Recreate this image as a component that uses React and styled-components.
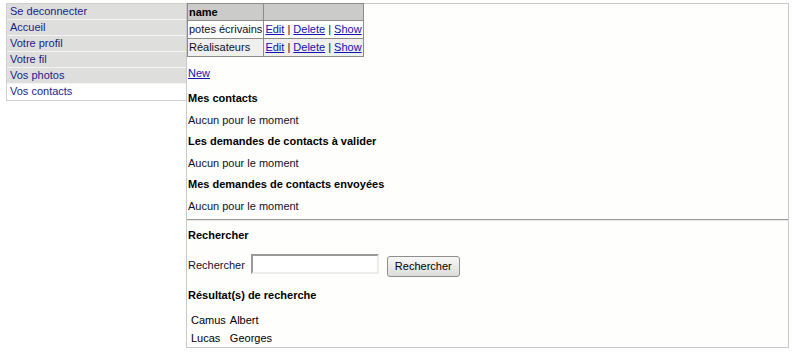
import React from "react";
import styled, { createGlobalStyle } from "styled-components";

const GlobalStyle = createGlobalStyle`
  body {
    margin: 0;
    background: #ffffff;
    font-family: "Liberation Sans", Arial, sans-serif;
    font-size: 11px;
    color: #10102a;
  }
`;

const Page = styled.div({
  display: "flex",
  alignItems: "flex-start",
  padding: "3px 3px 0 6px",
});

const Menu = styled.ul({
  listStyle: "none",
  margin: 0,
  padding: 0,
  width: 180,
  border: "1px solid #cfcfcf",
  borderRight: "none",
  boxSizing: "border-box",
});

const MenuItem = styled.li(({ $active }) => ({
  height: 16,
  boxSizing: "border-box",
  lineHeight: "15px",
  padding: "0 3px",
  background: $active ? "#ffffff" : "#dededc",
  borderBottom: "1px solid #f4f4f2",
  a: {
    color: "#1c1c8a",
    textDecoration: "none",
  },
  "&:last-child": {
    borderBottom: "none",
  },
}));

const Content = styled.div({
  flex: 1,
  height: 345,
  boxSizing: "border-box",
  border: "1px solid #c8c8c8",
  background: "#fefefc",
});

const Table = styled.table({
  borderCollapse: "collapse",
  margin: "-1px 0 0 0",
  "th, td": {
    border: "1px solid #8c8c8c",
    padding: "0 1px",
    height: 17,
    lineHeight: "15px",
    textAlign: "left",
    whiteSpace: "nowrap",
  },
  th: {
    background: "#cbcbc9",
    fontWeight: "bold",
    color: "#000",
    height: 16,
  },
  "tr.alt td": {
    background: "#efefed",
  },
  a: {
    color: "#1212b0",
  },
});

const Link = styled.a({
  color: "#1212b0",
  textDecoration: "underline",
});

const NewLine = styled.div({
  margin: "10px 1px 12px",
  lineHeight: "13px",
});

const Heading = styled.h3(({ $top }) => ({
  fontSize: 11,
  fontWeight: "bold",
  color: "#000",
  lineHeight: "13.5px",
  margin: `${$top ?? 8}px 1px 8px`,
}));

const Text = styled.p({
  margin: "8px 1px",
  lineHeight: "13.5px",
});

const Rule = styled.hr({
  margin: "-2px 0 0 0",
  border: "none",
  borderTop: "1px solid #9a9a9a",
  borderBottom: "1px solid #e8e8e8",
});

const SearchForm = styled.form({
  display: "flex",
  alignItems: "center",
  margin: "11px 1px 8px",
});

const Input = styled.input({
  width: 128,
  height: 20,
  boxSizing: "border-box",
  borderStyle: "solid",
  borderWidth: 2,
  borderColor: "#9a9a9a #ececec #ececec #9a9a9a",
  background: "#fff",
  margin: "-3px 8px 0 6px",
});

const Button = styled.button({
  height: 21,
  padding: "0 7px",
  fontFamily: "inherit",
  fontSize: 11,
  color: "#000",
  border: "1px solid #8e8e8e",
  borderRadius: 3,
  background: "linear-gradient(#f8f8f6, #dcdcda)",
  marginTop: 2,
});

const Results = styled.table({
  borderSpacing: 2,
  margin: "3px 1px 0",
  td: {
    padding: "0 1px",
    lineHeight: "16px",
    color: "#000",
  },
});

const menu = [
  "Se deconnecter",
  "Accueil",
  "Votre profil",
  "Votre fil",
  "Vos photos",
  "Vos contacts",
];

const groups = [
  { name: "potes écrivains" },
  { name: "Réalisateurs", alt: true },
];

const people = [
  ["Camus", "Albert"],
  ["Lucas", "Georges"],
];

export default function App() {
  return (
    <>
      <GlobalStyle />
      <Page>
        <Menu>
          {menu.map((label, i) => (
            <MenuItem key={label} $active={i === menu.length - 1}>
              <a href="#">{label}</a>
            </MenuItem>
          ))}
        </Menu>
        <Content>
          <Table>
            <thead>
              <tr>
                <th>name</th>
                <th></th>
              </tr>
            </thead>
            <tbody>
              {groups.map((g) => (
                <tr key={g.name} className={g.alt ? "alt" : ""}>
                  <td>{g.name}</td>
                  <td>
                    <a href="#">Edit</a> | <a href="#">Delete</a> |{" "}
                    <a href="#">Show</a>
                  </td>
                </tr>
              ))}
            </tbody>
          </Table>
          <NewLine>
            <Link href="#">New</Link>
          </NewLine>
          <Heading>Mes contacts</Heading>
          <Text>Aucun pour le moment</Text>
          <Heading>Les demandes de contacts à valider</Heading>
          <Text>Aucun pour le moment</Text>
          <Heading>Mes demandes de contacts envoyées</Heading>
          <Text>Aucun pour le moment</Text>
          <Rule />
          <Heading $top={8}>Rechercher</Heading>
          <SearchForm onSubmit={(e) => e.preventDefault()}>
            <span>Rechercher</span>
            <Input type="text" />
            <Button type="submit">Rechercher</Button>
          </SearchForm>
          <Heading $top={12}>Résultat(s) de recherche</Heading>
          <Results>
            <tbody>
              {people.map(([last, first]) => (
                <tr key={last}>
                  <td>{last}</td>
                  <td>{first}</td>
                </tr>
              ))}
            </tbody>
          </Results>
        </Content>
      </Page>
    </>
  );
}
